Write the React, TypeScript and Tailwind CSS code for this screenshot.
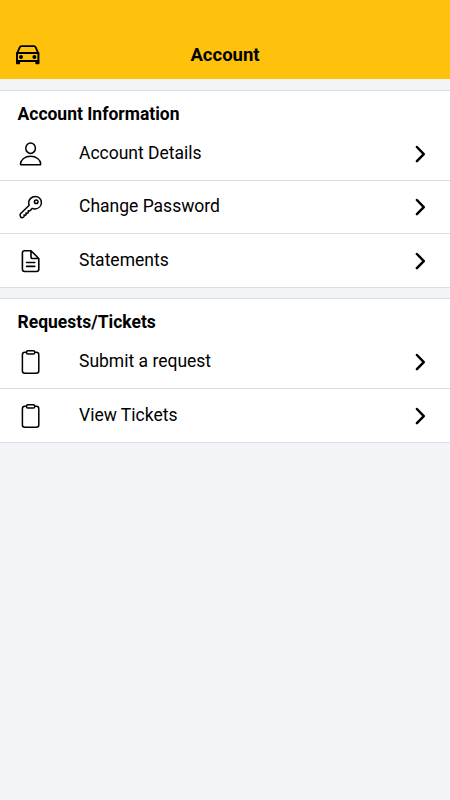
import type { ReactNode } from "react";

const strokeProps = {
  width: 24,
  height: 24,
  viewBox: "0 0 24 24",
  fill: "none",
  stroke: "currentColor",
  strokeWidth: 1.5,
  strokeLinecap: "round",
  strokeLinejoin: "round",
} as const;

function CarIcon() {
  return (
    <svg width="24" height="20" viewBox="0 0 24 20" fill="none" stroke="currentColor">
      <path d="M1.2 8.2 3.8 2.2Q4.2 1.2 5.2 1.2H18.2Q19.2 1.2 19.6 2.2L22.2 8.2" strokeWidth="1.8" />
      <path d="M1 8H22.4V16H1Z" strokeWidth="2" strokeLinejoin="round" />
      <path d="M0 15.5H4V18.6Q4 19.3 3.3 19.3H.7Q0 19.3 0 18.6ZM19.4 15.5H23.4V18.6Q23.4 19.3 22.7 19.3H20.1Q19.4 19.3 19.4 18.6Z" fill="currentColor" stroke="none" />
      <circle cx="5" cy="12" r="2" fill="currentColor" stroke="none" />
      <circle cx="18.4" cy="12" r="2" fill="currentColor" stroke="none" />
    </svg>
  );
}

function PersonIcon() {
  return (
    <svg {...strokeProps}>
      <ellipse cx="11.6" cy="6.2" rx="4.8" ry="5.2" />
      <path d="M11.6 14.2C6 14.2 1.7 17.7 1.5 21.9Q1.5 22.7 2.2 22.7H21Q21.7 22.7 21.7 21.9C21.5 17.7 17.2 14.2 11.6 14.2Z" />
    </svg>
  );
}

function KeyIcon() {
  return (
    <svg {...strokeProps}>
      <path d="M16.4 1.5C12.5 1.5 9.7 4.4 9.7 7.8C9.7 8.7 9.9 9.6 10.2 10.3L1.5 18.8Q.9 19.5 1.1 20.5Q1.5 22.7 3 22.8Q4.2 22.6 5 21.6Q5.5 20.9 5 20L6.3 20.2Q7.1 20.1 7.2 19.3L7 18L8.3 18.2Q9.2 18.1 9.3 17.2L9.2 15.8L10.5 15.9Q11.1 15.8 11.5 15.2L13.3 13.4C14.3 13.8 15.3 14 16.3 13.9C19.8 13.6 22.4 10.9 22.4 7.4C22.4 4 19.8 1.5 16.4 1.5Z" />
      <circle cx="17.2" cy="6.7" r="1.8" />
    </svg>
  );
}

function DocumentIcon() {
  return (
    <svg {...strokeProps} strokeWidth={1.6}>
      <path d="M12 1.7H5.6Q3.4 1.7 3.4 3.9V20.3Q3.4 22.5 5.6 22.5H17.6Q19.8 22.5 19.8 20.3V9.5ZM12 1.7V7.7Q12 9.5 13.8 9.5H19.8" />
      <path d="M7.6 13.5H15.8M7.6 17.4H15.8" />
    </svg>
  );
}

function ClipboardIcon() {
  return (
    <svg {...strokeProps}>
      <path d="M7.5 2.3H5.8Q3.4 2.3 3.4 4.7V21Q3.4 23.2 5.8 23.2H17.4Q19.8 23.2 19.8 21V4.7Q19.8 2.3 17.4 2.3H15.7" />
      <rect x="7.5" y=".8" width="8.2" height="3.3" rx="1.3" />
    </svg>
  );
}

function ChevronIcon() {
  return (
    <svg width="12" height="18" viewBox="0 0 12 18" fill="none" stroke="currentColor" strokeWidth="2.5" strokeLinecap="round" strokeLinejoin="round">
      <path d="M1.9 2 8.8 9.1 1.9 16.2" />
    </svg>
  );
}

function Row({ icon, label }: { icon: ReactNode; label: string }) {
  return (
    <button className="flex h-[53px] w-full items-center border-b border-[#dedfe2] pr-[23px] pl-[19px] text-left last:border-b-0">
      {icon}
      <span className="ml-9 flex-1 pb-0.5 text-[17.5px] leading-6">{label}</span>
      <ChevronIcon />
    </button>
  );
}

function Section({ title, children }: { title: string; children: ReactNode }) {
  return (
    <section className="border-y border-[#dedfe2] bg-white">
      <h2 className="h-[37px] pt-[11px] pl-[17.5px] text-[17.5px] leading-6 font-bold">{title}</h2>
      {children}
    </section>
  );
}

export default function App() {
  return (
    <div className="min-h-screen bg-[#f2f4f8] font-['Roboto',sans-serif] text-black">
      <header className="grid h-[79px] grid-cols-[1fr_auto_1fr] items-center bg-[#ffc20c] px-4 pt-[31px]">
        <CarIcon />
        <h1 className="text-[18.5px] leading-6 font-bold">Account</h1>
      </header>
      <main className="flex flex-col gap-2.5 pt-[11px]">
        <Section title="Account Information">
          <Row icon={<PersonIcon />} label="Account Details" />
          <Row icon={<KeyIcon />} label="Change Password" />
          <Row icon={<DocumentIcon />} label="Statements" />
        </Section>
        <Section title="Requests/Tickets">
          <Row icon={<ClipboardIcon />} label="Submit a request" />
          <Row icon={<ClipboardIcon />} label="View Tickets" />
        </Section>
      </main>
    </div>
  );
}
